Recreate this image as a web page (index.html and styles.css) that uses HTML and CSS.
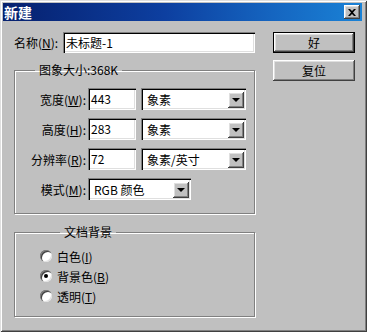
FILE: index.html
```html
<!DOCTYPE html>
<html lang="zh-CN">
<head>
  <meta charset="UTF-8">
  <link rel="stylesheet" href="styles.css">
</head>
<body>
<div class="window">
  <div class="titlebar">
    <span class="title">新建</span>
    <span class="close-btn">
      <svg width="8" height="7" viewBox="0 0 8 7"><path d="M0 0h2l2 2 2-2h2L5 3.5 8 7H6L4 5 2 7H0l3-3.5z" fill="#000"/></svg>
    </span>
  </div>

  <div class="dialog-body">
    <div class="main">
      <div class="name-row">
        <span class="name-label">名称(<u>N</u>):</span>
        <div class="field name-field">未标题-1</div>
      </div>

      <fieldset class="group">
        <legend>图象大小:368K</legend>
        <div class="form-row">
          <span class="row-label">宽度(<u>W</u>):</span>
          <div class="field num-field">443</div>
          <div class="select unit-select"><span class="select-text">象素</span><span class="arrow"><i></i></span></div>
        </div>
        <div class="form-row">
          <span class="row-label">高度(<u>H</u>):</span>
          <div class="field num-field">283</div>
          <div class="select unit-select"><span class="select-text">象素</span><span class="arrow"><i></i></span></div>
        </div>
        <div class="form-row">
          <span class="row-label">分辨率(<u>R</u>):</span>
          <div class="field num-field">72</div>
          <div class="select unit-select"><span class="select-text">象素/英寸</span><span class="arrow"><i></i></span></div>
        </div>
        <div class="form-row">
          <span class="row-label">模式(<u>M</u>):</span>
          <div class="select mode-select"><span class="select-text">RGB 颜色</span><span class="arrow"><i></i></span></div>
        </div>
      </fieldset>

      <fieldset class="group bg-group">
        <legend>文档背景</legend>
        <div class="radio-row"><span class="radio"></span>白色(<u>I</u>)</div>
        <div class="radio-row"><span class="radio checked"></span>背景色(<u>B</u>)</div>
        <div class="radio-row"><span class="radio"></span>透明(<u>T</u>)</div>
      </fieldset>
    </div>

    <div class="side">
      <div class="btn default-btn">好</div>
      <div class="btn">复位</div>
    </div>
  </div>
</div>
</body>
</html>
```

FILE: styles.css
```css
body {
  margin: 0;
  background-color: #c0c0c0;
  font-family: "Noto Sans CJK SC", "DejaVu Sans", sans-serif;
  font-size: 12px;
  color: #000;
}

u {
  text-decoration: underline;
}

.window {
  width: 367px;
  height: 332px;
  box-sizing: border-box;
  padding: 3px 5px 3px 3px;
  background-color: #c0c0c0;
  box-shadow: inset 1px 1px 0 #dfdfdf, inset -1px -1px 0 #404040,
              inset 2px 2px 0 #fff, inset -2px -2px 0 #808080;
}

.titlebar {
  height: 18px;
  display: flex;
  align-items: center;
  justify-content: space-between;
  padding: 0 2px 0 1px;
  background: linear-gradient(90deg, #06206e 0%, #0d3fa0 45%, #1565c0 75%, #1a82d6 100%);
}

.title {
  color: #fff;
  font-weight: bold;
  font-size: 14px;
  line-height: 18px;
}

.close-btn {
  width: 16px;
  height: 14px;
  display: flex;
  align-items: center;
  justify-content: center;
  background-color: #c0c0c0;
  box-shadow: inset -1px -1px 0 #404040, inset 1px 1px 0 #fff,
              inset -2px -2px 0 #808080, inset 2px 2px 0 #dfdfdf;
}

.dialog-body {
  display: flex;
  padding: 11px 0 0 11px;
}

.main {
  width: 241px;
}

.side {
  margin-left: 18px;
  display: flex;
  flex-direction: column;
  gap: 7px;
}

/* sunken edit box */
.field {
  height: 22px;
  box-sizing: border-box;
  padding: 2px 3px;
  line-height: 18px;
  background-color: #fff;
  box-shadow: inset 1px 1px 0 #808080, inset 2px 2px 0 #000,
              inset -1px -1px 0 #fff, inset -2px -2px 0 #dfdfdf;
}

.name-row {
  display: flex;
  align-items: center;
}

.name-label {
  width: 52px;
}

.name-field {
  width: 192px;
  height: 21px;
  flex-shrink: 0;
}

.group {
  margin: 9px 0 0 0;
  padding: 10px 0 13px 0;
  border: 1px solid #808080;
  box-shadow: 1px 1px 0 #fff, inset 1px 1px 0 #fff;
}

.group legend {
  margin-left: 20px;
  padding: 0 4px;
  line-height: 16px;
}

.form-row {
  display: flex;
  align-items: center;
  height: 22px;
  margin-bottom: 8px;
}

.form-row:last-child {
  margin-bottom: 0;
}

.row-label {
  width: 71px;
  margin-right: 2px;
  text-align: right;
}

.num-field {
  width: 48px;
  margin-right: 5px;
}

.select {
  height: 22px;
  box-sizing: border-box;
  display: flex;
  align-items: center;
  justify-content: space-between;
  padding: 2px 2px 2px 6px;
  background-color: #fff;
  box-shadow: inset 1px 1px 0 #808080, inset 2px 2px 0 #000,
              inset -1px -1px 0 #fff, inset -2px -2px 0 #dfdfdf;
}

.unit-select {
  width: 105px;
}

.mode-select {
  width: 103px;
}

.arrow {
  width: 16px;
  height: 16px;
  margin-top: 1px;
  display: flex;
  align-items: center;
  justify-content: center;
  background-color: #c0c0c0;
  box-shadow: inset -1px -1px 0 #404040, inset 1px 1px 0 #fff,
              inset -2px -2px 0 #808080, inset 2px 2px 0 #dfdfdf;
}

.arrow i {
  width: 0;
  height: 0;
  border-left: 4px solid transparent;
  border-right: 4px solid transparent;
  border-top: 4px solid #000;
}

.bg-group {
  margin-top: 10px;
  padding: 6px 0 10px 25px;
}

.radio-row {
  display: flex;
  align-items: center;
  height: 20px;
}

.radio {
  width: 12px;
  height: 12px;
  margin-right: 5px;
  border-radius: 50%;
  background-color: #fff;
  display: flex;
  align-items: center;
  justify-content: center;
  box-shadow: inset 1px 1px 0 #808080, inset 2px 2px 0 #404040,
              inset -1px -1px 0 #dfdfdf;
}

.radio.checked::after {
  content: "";
  width: 4px;
  height: 4px;
  border-radius: 50%;
  background-color: #000;
}

.btn {
  width: 82px;
  height: 21px;
  box-sizing: border-box;
  display: flex;
  align-items: center;
  justify-content: center;
  background-color: #c0c0c0;
  box-shadow: inset -1px -1px 0 #404040, inset 1px 1px 0 #fff,
              inset -2px -2px 0 #808080, inset 2px 2px 0 #dfdfdf;
}

.default-btn {
  border: 1px solid #000;
}
```
